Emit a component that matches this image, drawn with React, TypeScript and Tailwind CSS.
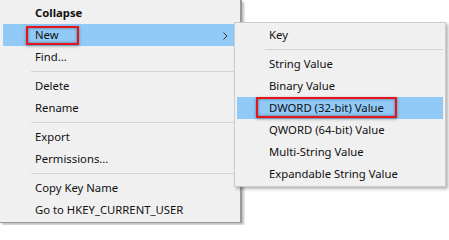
type Item = { label?: string; bold?: boolean; sep?: boolean; active?: boolean; arrow?: boolean; box?: string }

const mainItems: Item[] = [
  { label: 'Collapse', bold: true },
  { label: 'New', active: true, arrow: true, box: 'left-[23px] top-[2px] w-[53px] h-[19px]' },
  { label: 'Find...' },
  { sep: true },
  { label: 'Delete' },
  { label: 'Rename' },
  { sep: true },
  { label: 'Export' },
  { label: 'Permissions...' },
  { sep: true },
  { label: 'Copy Key Name' },
  { label: 'Go to HKEY_CURRENT_USER' },
]

const subItems: Item[] = [
  { label: 'Key' },
  { sep: true },
  { label: 'String Value' },
  { label: 'Binary Value' },
  { label: 'DWORD (32-bit) Value', active: true, box: 'left-[19px] top-0 w-[141px] h-[21px]' },
  { label: 'QWORD (64-bit) Value' },
  { label: 'Multi-String Value' },
  { label: 'Expandable String Value' },
]

function Chevron() {
  return (
    <svg width="5" height="8" viewBox="0 0 5 8" className="absolute right-[9px] top-[8px]">
      <path d="M0.5 0.5 L4 4 L0.5 7.5" fill="none" stroke="#333" strokeWidth="1" />
    </svg>
  )
}

function MenuRows({ items }: { items: Item[] }) {
  return (
    <>
      {items.map((it, i) =>
        it.sep ? (
          <div key={i} className="h-[7px] flex items-center pl-[28px]">
            <div className="h-px w-full bg-[#d5d5d5]" />
          </div>
        ) : (
          <div
            key={i}
            className={`relative h-[22px] flex items-center pl-[32px] ${it.active ? 'bg-[#91c9f7]' : ''} ${it.bold ? 'font-bold' : ''}`}
          >
            <span className="relative z-10">{it.label}</span>
            {it.arrow && <Chevron />}
            {it.box && (
              <div
                className={`absolute ${it.box} border-2 border-[#e5141b] shadow-[inset_0_0_3px_rgba(0,0,0,0.45),0_1px_3px_rgba(0,0,0,0.35)]`}
              />
            )}
          </div>
        )
      )}
    </>
  )
}

export default function App() {
  return (
    <div
      className="relative w-[449px] h-[225px] bg-white overflow-hidden text-[11.3px] text-[#111]"
      style={{ fontFamily: '"Noto Sans", "Open Sans", sans-serif' }}
    >
      {/* main context menu */}
      <div className="w-[242px] h-[223px] bg-[#f0f0f0] border-r-2 border-b border-[#9a9a9a] shadow-[2px_2px_2px_rgba(0,0,0,0.25)] pt-[2px] px-[3px]">
        <MenuRows items={mainItems} />
      </div>

      {/* New submenu */}
      <div className="absolute left-[234px] top-[22px] w-[212px] h-[165px] bg-[#f0f0f0] border border-[#cccccc] shadow-[2px_2px_3px_rgba(0,0,0,0.3)] py-px px-[2px]">
        <MenuRows items={subItems} />
      </div>
    </div>
  )
}
